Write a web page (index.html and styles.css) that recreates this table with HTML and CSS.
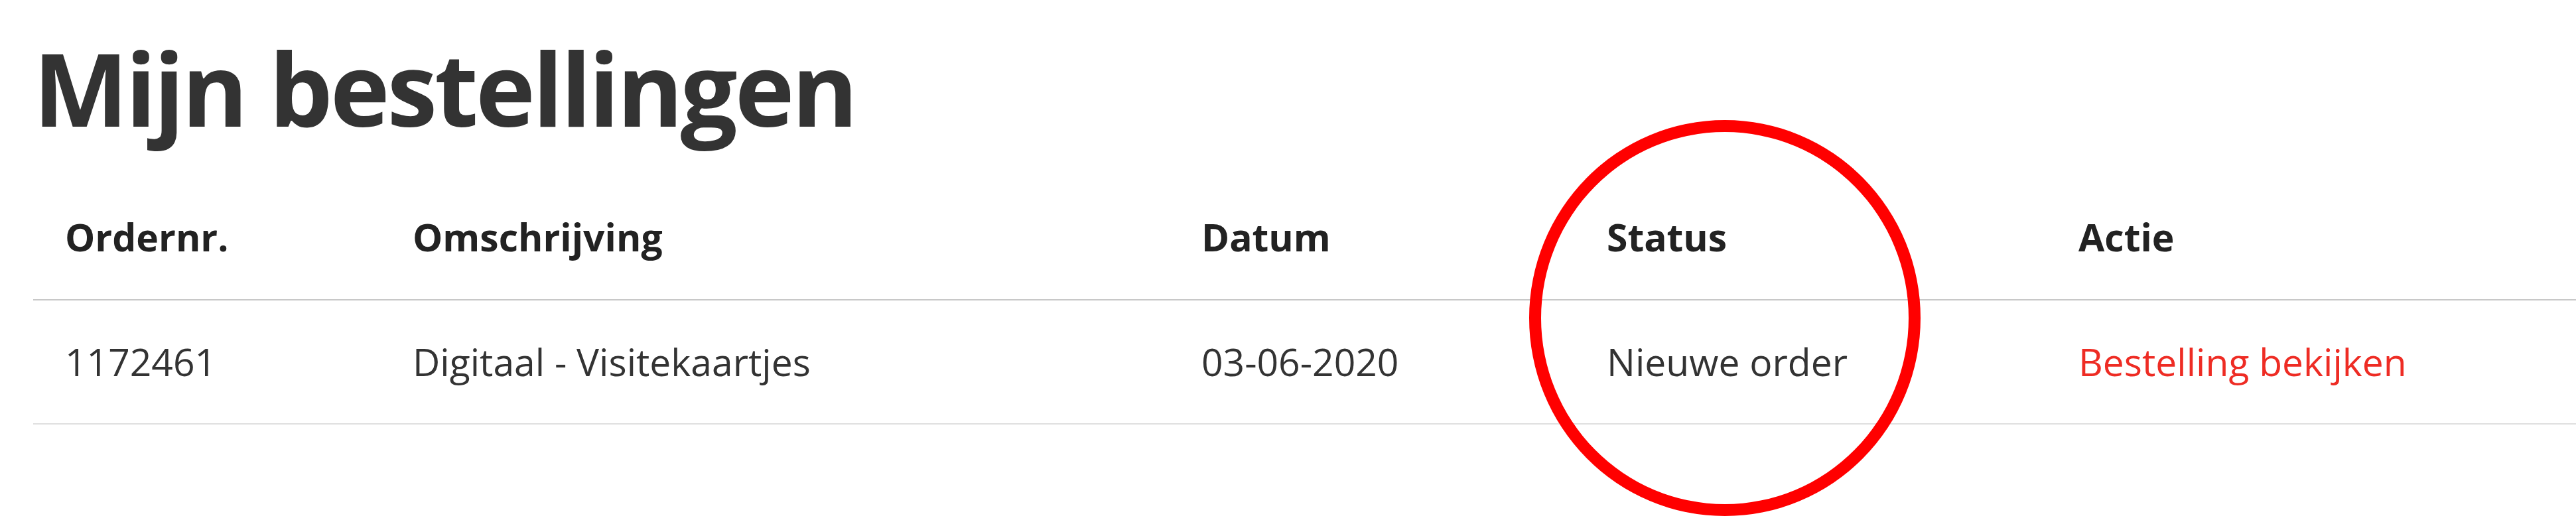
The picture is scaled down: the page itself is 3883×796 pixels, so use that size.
FILE: index.html
```html
<!DOCTYPE html>
<html lang="nl">
<head>
    <meta charset="UTF-8">
    <meta name="viewport" content="width=device-width, initial-scale=1.0">
    <title>Mijn bestellingen</title>
    <link rel="stylesheet" href="styles.css">
</head>
<body>
    <div class="page">
        <h1>Mijn bestellingen</h1>

        <table class="orders">
            <colgroup>
                <col class="col-nr">
                <col class="col-desc">
                <col class="col-date">
                <col class="col-status">
                <col>
            </colgroup>
            <thead>
                <tr>
                    <th>Ordernr.</th>
                    <th>Omschrijving</th>
                    <th>Datum</th>
                    <th>Status</th>
                    <th>Actie</th>
                </tr>
            </thead>
            <tbody>
                <tr>
                    <td>1172461</td>
                    <td>Digitaal - Visitekaartjes</td>
                    <td>03-06-2020</td>
                    <td>Nieuwe order</td>
                    <td><a href="#">Bestelling bekijken</a></td>
                </tr>
            </tbody>
        </table>

        <!-- markering rond de status -->
        <div class="highlight"></div>
    </div>
</body>
</html>
```

FILE: styles.css
```css
html,
body {
    height: 100%;
}
body {
    margin: 0;
    font-family: "Open Sans", Arial, sans-serif;
    background-color: #fff;
    color: #333;
}
.page {
    position: relative;
    box-sizing: border-box;
    min-height: 796px;
    padding: 42px 0 0 50px;
}
h1 {
    margin: 0 0 41px;
    font-size: 152px;
    line-height: 1.2;
    font-weight: 700;
    letter-spacing: -4px;
    color: #333;
}
.orders {
    width: 100%;
    border-collapse: collapse;
    table-layout: fixed;
    font-size: 57px;
    line-height: 1.5;
}
.col-nr {
    width: 524px;
}
.col-desc {
    width: 1189px;
}
.col-date {
    width: 611px;
}
.col-status {
    width: 711px;
}
.orders th,
.orders td {
    padding: 50px 0 50px 48px;
    text-align: left;
    white-space: nowrap;
}
.orders th {
    font-weight: 700;
    color: #222;
    border-bottom: 2px solid #c8c8c8;
}
.orders td {
    color: #333;
    border-bottom: 2px solid #e0e0e0;
}
.orders a {
    color: #ee2c24;
    text-decoration: none;
}
.highlight {
    position: absolute;
    left: 2305px;
    top: 181px;
    width: 554px;
    height: 561px;
    border: 18px solid #ff0000;
    border-radius: 50%;
}
```
